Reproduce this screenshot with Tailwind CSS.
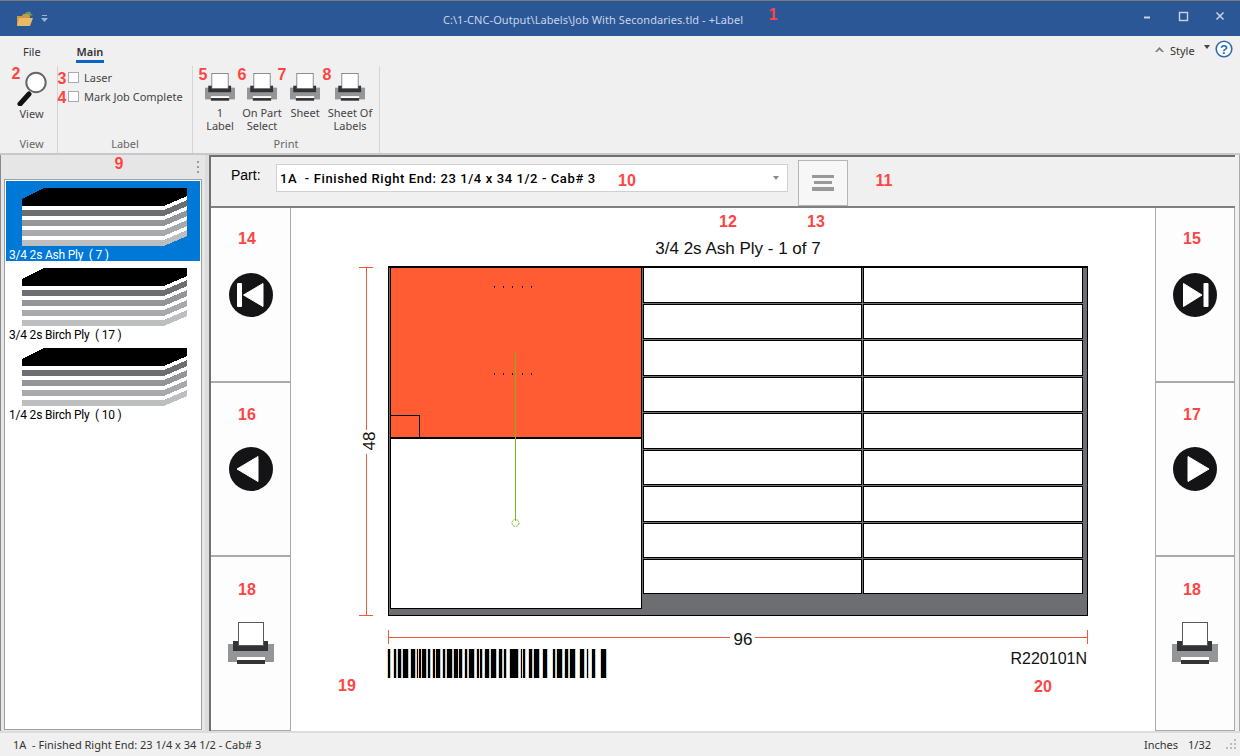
<!DOCTYPE html>
<html lang="en">
<head>
    <meta charset="UTF-8">
    <title>+Label</title>
    <script src="https://cdn.jsdelivr.net/npm/@tailwindcss/browser@4"></script>
</head>
<body class="bg-[#f0f0f0]">

    <!-- Shared icons -->
    <svg class="hidden" xmlns="http://www.w3.org/2000/svg">
        <symbol id="printer" viewBox="0 0 46 42">
            <rect x="0" y="22" width="46" height="18" fill="#939598"/>
            <rect x="5" y="19" width="35" height="10" fill="#333335"/>
            <rect x="10.5" y="0.5" width="25" height="23" fill="#fff" stroke="#58595b"/>
            <rect x="9" y="35" width="28" height="3" fill="#fff"/>
            <rect x="9" y="38" width="28" height="4" fill="#333335"/>
        </symbol>
        <symbol id="stack" viewBox="0 0 165 58">
            <g shape-rendering="crispEdges">
                <polygon points="0,11 22,0 165,0 165,8 142,18 0,18" fill="#000"/>
                <polygon points="0,18 142,18 165,8 165,12 142,22 0,22" fill="#fff"/>
                <polygon points="0,22 142,22 165,12 165,18 142,28 0,28" fill="#6d6e71"/>
                <polygon points="0,28 142,28 165,18 165,22 142,32 0,32" fill="#fff"/>
                <polygon points="0,32 142,32 165,22 165,28 142,38 0,38" fill="#939598"/>
                <polygon points="0,38 142,38 165,28 165,32 142,42 0,42" fill="#fff"/>
                <polygon points="0,42 142,42 165,32 165,38 142,48 0,48" fill="#a7a9ac"/>
                <polygon points="0,48 142,48 165,38 165,42 142,52 0,52" fill="#fff"/>
                <polygon points="0,52 142,52 165,42 165,48 142,58 0,58" fill="#bcbec0"/>
            </g>
        </symbol>
    </svg>

    <div class="relative w-[1240px] h-[756px] overflow-hidden flex flex-col bg-[#f0f0f0] font-['Noto_Sans',sans-serif] text-[11px] leading-[13px] text-[#444]">

        <!-- Title bar -->
        <div class="h-[36px] shrink-0 border-t border-[#7a7a7a] bg-[#2b5797] flex items-center text-[#c9d5e8]">
            <div class="w-[200px] flex items-center pl-[16px] gap-[7px]">
                <svg width="18" height="16" viewBox="0 0 18 16">
                    <path d="M1 5h5l1-2h7v11H1z" fill="#c99a45"/>
                    <path d="M3 7h14l-3 8H1z" fill="#eab968"/>
                    <path d="M8 4c1-3 4-4 7-3l-1 1 3 2-4 1 0-2c-2-.5-4 0-5 1z" fill="#6f9c6a"/>
                </svg>
                <svg width="7" height="7" viewBox="0 0 7 7">
                    <rect x="1" y="0" width="5" height="1" fill="#9fb2d1"/>
                    <polygon points="0,3 7,3 3.5,7" fill="#9fb2d1"/>
                </svg>
            </div>
            <div class="flex-1 text-center text-[11px] tracking-[0.07px] pt-[2px]">C:\1-CNC-Output\Labels\Job With Secondaries.tld - +Label</div>
            <div class="w-[254px] flex justify-end items-center">
                <svg width="106" height="20" viewBox="0 0 106 20" fill="none" stroke="#c9d3e4">
                    <path d="M10 8.5h6" stroke-width="2"/>
                    <rect x="45.5" y="3.5" width="8" height="8" stroke-width="1.4"/>
                    <path d="M82.5 3.5l7 7M89.5 3.5l-7 7" stroke-width="1.5"/>
                </svg>
            </div>
        </div>

        <!-- Ribbon -->
        <div class="h-[117px] shrink-0 relative">
            <div class="h-[27px] flex items-end justify-between">
                <div class="flex items-end pl-[23px]">
                    <div class="w-[53px] pb-[5px] text-[#333]">File</div>
                    <div class="w-[28px] pb-[2px] border-b-[3px] border-[#0a64c8] font-semibold text-[#333] text-center">Main</div>
                </div>
                <div class="flex items-center pr-[7px] pb-[5px]">
                    <svg width="9" height="6" viewBox="0 0 9 6" class="mr-[6px] mt-[2px]"><polygon points="4.5,0 9,5 7,5 4.5,2.5 2,5 0,5" fill="#777"/></svg>
                    <span class="w-[34px] text-[#333] mt-[3px]">Style</span>
                    <svg width="6" height="4" viewBox="0 0 6 4" class="mr-[5px] mb-[4px]"><polygon points="0,0 6,0 3,4" fill="#444"/></svg>
                    <svg width="18" height="18" viewBox="0 0 18 18">
                        <circle cx="9" cy="9" r="7.8" fill="#fff" stroke="#2b6db5" stroke-width="1.6"/>
                        <text x="9" y="13.5" text-anchor="middle" font-family="Liberation Sans" font-weight="700" font-size="13" fill="#2b6db5">?</text>
                    </svg>
                </div>
            </div>
            <div class="h-[87px] mt-[3px] flex">
                <!-- View group -->
                <div class="w-[58px] border-r border-[#d4d4d4] flex flex-col items-center">
                    <svg width="34" height="36" viewBox="0 0 34 36" class="mt-[4px] ml-[9px] shrink-0">
                        <path d="M13 24L4 34" stroke="#111" stroke-width="5" stroke-linecap="round"/>
                        <circle cx="20" cy="12.5" r="9.7" fill="#fff" stroke="#666" stroke-width="2"/>
                    </svg>
                    <div class="mt-[1px] ml-[6px]">View</div>
                    <div class="mt-[17px] ml-[6px] text-[#666]">View</div>
                </div>
                <!-- Label group -->
                <div class="w-[135px] border-r border-[#d4d4d4] flex flex-col pl-[10px]">
                    <label class="flex items-center gap-[5px] mt-[5px] h-[12px]"><span class="w-[11px] h-[11px] bg-white border border-[#aaa]"></span>Laser</label>
                    <label class="flex items-center gap-[5px] mt-[7px] h-[12px]"><span class="w-[11px] h-[11px] bg-white border border-[#aaa]"></span>Mark Job Complete</label>
                    <div class="mt-[35px] text-center text-[#666] pr-[10px]">Label</div>
                </div>
                <!-- Print group -->
                <div class="w-[187px] border-r border-[#d4d4d4] flex flex-col">
                    <div class="flex h-[61px] pt-[7px] text-center">
                        <div class="w-[54px] flex flex-col items-center">
                            <svg width="30" height="28" class="shrink-0"><use href="#printer"/></svg>
                            <div class="mt-[5px]">1<br>Label</div>
                        </div>
                        <div class="w-[30px] flex flex-col items-center">
                            <svg width="30" height="28" class="shrink-0"><use href="#printer"/></svg>
                            <div class="mt-[5px] whitespace-nowrap">On Part<br>Select</div>
                        </div>
                        <div class="w-[56px] flex flex-col items-center">
                            <svg width="30" height="28" class="shrink-0"><use href="#printer"/></svg>
                            <div class="mt-[5px]">Sheet</div>
                        </div>
                        <div class="w-[34px] flex flex-col items-center">
                            <svg width="30" height="28" class="shrink-0"><use href="#printer"/></svg>
                            <div class="mt-[5px] whitespace-nowrap">Sheet Of<br>Labels</div>
                        </div>
                    </div>
                    <div class="mt-[10px] text-center text-[#666]">Print</div>
                </div>
            </div>
        </div>

        <!-- Body -->
        <div class="h-[578px] shrink-0 flex border-t-2 border-[#c8c8c8]">
            <!-- Material list -->
            <div class="w-[209px] shrink-0 flex flex-col bg-[#e6e6e6] border-l border-[#8a8a8a] border-r-[4px] border-r-[#dcdcdc]">
                <div class="h-[24px] shrink-0 flex justify-end items-center pr-[6px]">
                    <div class="flex flex-col gap-[3px]">
                        <span class="w-[2px] h-[2px] bg-[#999]"></span>
                        <span class="w-[2px] h-[2px] bg-[#999]"></span>
                        <span class="w-[2px] h-[2px] bg-[#999]"></span>
                    </div>
                </div>
                <div class="flex-1 mx-[3px] mb-[1px] bg-white border border-[#a0a0a0] p-[1px] font-['Roboto',sans-serif] text-[12px] tracking-[-0.2px] text-black">
                    <div class="h-[80px] bg-[#0078d7] text-white pt-[7px] pl-[16px] relative">
                        <svg width="165" height="58" class="block"><use href="#stack"/></svg>
                        <div class="absolute left-[3px] top-[68px] whitespace-pre">3/4 2s Ash Ply  ( 7 )</div>
                    </div>
                    <div class="h-[80px] pt-[7px] pl-[16px] relative">
                        <svg width="165" height="58" class="block"><use href="#stack"/></svg>
                        <div class="absolute left-[3px] top-[68px] whitespace-pre">3/4 2s Birch Ply  ( 17 )</div>
                    </div>
                    <div class="h-[80px] pt-[7px] pl-[16px] relative">
                        <svg width="165" height="58" class="block"><use href="#stack"/></svg>
                        <div class="absolute left-[3px] top-[68px] whitespace-pre">1/4 2s Birch Ply  ( 10 )</div>
                    </div>
                </div>
            </div>

            <!-- Main panel -->
            <div class="w-[1026px] shrink-0 flex flex-col border-l-2 border-t-2 border-[#707070] bg-white">
                <!-- Part selector -->
                <div class="h-[51px] shrink-0 bg-[#f0f0f0] border-b-2 border-[#808080] flex items-start font-['Liberation_Sans',sans-serif]">
                    <div class="w-[65px] pl-[20px] mt-[12px] text-[14px] text-black">Part:</div>
                    <div class="w-[512px] h-[28px] mt-[7px] bg-white border border-[#d0d0d0] flex items-center justify-between pl-[3px] pr-[8px]">
                        <span class="font-['Roboto',sans-serif] font-medium text-[13px] text-black whitespace-pre tracking-[0.6px]">1A  - Finished Right End: 23 1/4 x 34 1/2 - Cab# 3</span>
                        <svg width="6" height="4" viewBox="0 0 6 4"><polygon points="0,0 6,0 3,4" fill="#888"/></svg>
                    </div>
                    <div class="ml-[10px] mt-[3px] w-[50px] h-[46px] bg-[#f7f7f7] border border-[#b5b5b5] flex flex-col items-center justify-center gap-[3px]">
                        <span class="w-[22px] h-[3px] bg-[#999]"></span>
                        <span class="w-[18px] h-[3px] bg-[#999]"></span>
                        <span class="w-[22px] h-[4px] bg-[#999]"></span>
                    </div>
                </div>

                <!-- Nav columns and drawing -->
                <div class="flex-1 min-h-0 flex">
                    <div class="w-[80px] shrink-0 flex flex-col border-r border-b border-[#aaa] bg-[#fdfdfd]">
                        <button class="h-[175px] flex items-center justify-center border-b-2 border-[#aaa] pl-[1px]">
                            <svg width="44" height="44" viewBox="0 0 44 44">
                                <circle cx="22" cy="22" r="22" fill="#141416"/>
                                <rect x="8" y="10" width="5" height="24" rx="1" fill="#fff"/>
                                <polygon points="14.5,22 34,10.5 34,33.5" fill="#fff" stroke="#fff" stroke-linejoin="round"/>
                            </svg>
                        </button>
                        <button class="h-[174px] flex items-center justify-center border-b-2 border-[#aaa] pl-[1px]">
                            <svg width="44" height="44" viewBox="0 0 44 44">
                                <circle cx="22" cy="22" r="22" fill="#141416"/>
                                <polygon points="8,22 29,9.5 29,34.5" fill="#fff" stroke="#fff" stroke-linejoin="round"/>
                            </svg>
                        </button>
                        <button class="flex-1 flex items-center justify-center pl-[1px] pb-[2px]">
                            <svg width="46" height="42"><use href="#printer"/></svg>
                        </button>
                    </div>

                    <!-- Sheet drawing -->
                    <svg class="shrink-0 block w-[864px] h-[522px]" width="864" height="522" viewBox="291 208 864 522" font-family="Liberation Sans" shape-rendering="crispEdges">
                        <text x="738" y="254" text-anchor="middle" font-size="17" fill="#111">3/4 2s Ash Ply - 1 of 7</text>

                        <!-- Sheet -->
                        <rect x="388.5" y="266.5" width="699" height="349" fill="#6d6e71" stroke="#000"/>
                        <rect x="389" y="266" width="698" height="2" fill="#000"/>
                        <rect x="390.5" y="267.5" width="251" height="170" fill="#ff5c33" stroke="#000"/>
                        <rect x="391" y="437" width="250" height="2" fill="#000"/>
                        <rect x="391" y="268" width="33" height="1" fill="#ff5c33"/>
                        <rect x="390.5" y="438.5" width="251" height="170" fill="#fff" stroke="#000"/>
                        <rect x="390.5" y="415.5" width="29" height="22" fill="none" stroke="#000"/>

                        <!-- Cells -->
                        <g fill="#fff" stroke="#000">
                            <rect x="643.5" y="267.5" width="218" height="35"/><rect x="863.5" y="267.5" width="219" height="35"/>
                            <rect x="643.5" y="304.5" width="218" height="34"/><rect x="863.5" y="304.5" width="219" height="34"/>
                            <rect x="643.5" y="340.5" width="218" height="35"/><rect x="863.5" y="340.5" width="219" height="35"/>
                            <rect x="643.5" y="377.5" width="218" height="34"/><rect x="863.5" y="377.5" width="219" height="34"/>
                            <rect x="643.5" y="413.5" width="218" height="35"/><rect x="863.5" y="413.5" width="219" height="35"/>
                            <rect x="643.5" y="450.5" width="218" height="34"/><rect x="863.5" y="450.5" width="219" height="34"/>
                            <rect x="643.5" y="486.5" width="218" height="35"/><rect x="863.5" y="486.5" width="219" height="35"/>
                            <rect x="643.5" y="523.5" width="218" height="34"/><rect x="863.5" y="523.5" width="219" height="34"/>
                            <rect x="643.5" y="559.5" width="218" height="34"/><rect x="863.5" y="559.5" width="219" height="34"/>
                        </g>

                        <!-- Machining marks -->
                        <g fill="#000">
                            <rect x="494" y="286" width="1" height="2"/><rect x="503" y="286" width="1" height="2"/><rect x="512" y="286" width="1" height="2"/><rect x="522" y="286" width="1" height="2"/><rect x="531" y="286" width="1" height="2"/>
                            <rect x="494" y="373" width="1" height="2"/><rect x="503" y="373" width="1" height="2"/><rect x="512" y="373" width="1" height="2"/><rect x="522" y="373" width="1" height="2"/><rect x="531" y="373" width="1" height="2"/>
                        </g>
                        <rect x="515" y="353" width="1" height="168" fill="#7fb414"/>
                        <circle cx="515.5" cy="523" r="3.5" fill="none" stroke="#7fb414" stroke-dasharray="2 1" shape-rendering="auto"/>

                        <!-- Dimensions -->
                        <g fill="#f15a36">
                            <rect x="366" y="267" width="1" height="349"/>
                            <rect x="359" y="267" width="14" height="1"/>
                            <rect x="359" y="615" width="14" height="1"/>
                            <rect x="388" y="637" width="700" height="1"/>
                            <rect x="388" y="630" width="1" height="14"/>
                            <rect x="1087" y="630" width="1" height="14"/>
                        </g>
                        <rect x="360" y="430" width="18" height="24" fill="#fff"/>
                        <text transform="translate(375 441) rotate(-90)" text-anchor="middle" font-size="17" fill="#111" shape-rendering="auto">48</text>
                        <rect x="730" y="630" width="25" height="16" fill="#fff"/>
                        <text x="743" y="645" text-anchor="middle" font-size="17" fill="#111">96</text>

                        <!-- Barcode -->
                        <g id="barcode"></g>
                        <text x="1087" y="664" text-anchor="end" font-size="16" fill="#111">R220101N</text>
                    </svg>

                    <div class="w-[80px] shrink-0 flex flex-col border-l border-r border-b border-[#aaa] bg-[#fdfdfd]">
                        <button class="h-[175px] flex items-center justify-center border-b-2 border-[#aaa]">
                            <svg width="44" height="44" viewBox="0 0 44 44">
                                <circle cx="22" cy="22" r="22" fill="#141416"/>
                                <polygon points="10.5,10.5 29,22 10.5,33.5" fill="#fff" stroke="#fff" stroke-linejoin="round"/>
                                <rect x="30.5" y="10" width="5" height="24" rx="1" fill="#fff"/>
                            </svg>
                        </button>
                        <button class="h-[174px] flex items-center justify-center border-b-2 border-[#aaa]">
                            <svg width="44" height="44" viewBox="0 0 44 44">
                                <circle cx="22" cy="22" r="22" fill="#141416"/>
                                <polygon points="15,9.5 36,22 15,34.5" fill="#fff" stroke="#fff" stroke-linejoin="round"/>
                            </svg>
                        </button>
                        <button class="flex-1 flex items-center justify-center pb-[2px]">
                            <svg width="46" height="42"><use href="#printer"/></svg>
                        </button>
                    </div>
                </div>
            </div>
            <div class="flex-1 border-r border-[#aaa]"></div>
        </div>

        <!-- Status bar -->
        <div class="h-[25px] shrink-0 border-t-2 border-[#dcdcdc] flex items-center justify-between pl-[13px] pr-[3px] text-[#333]">
            <span class="whitespace-pre">1A  - Finished Right End: 23 1/4 x 34 1/2 - Cab# 3</span>
            <div class="flex items-center">
                <span class="w-[44px]">Inches</span>
                <span class="w-[38px]">1/32</span>
                <svg width="11" height="11" viewBox="0 0 11 11" fill="#bbb">
                    <rect x="8" y="0" width="2" height="2"/><rect x="4" y="4" width="2" height="2"/><rect x="8" y="4" width="2" height="2"/>
                    <rect x="0" y="8" width="2" height="2"/><rect x="4" y="8" width="2" height="2"/><rect x="8" y="8" width="2" height="2"/>
                </svg>
            </div>
        </div>

        <!-- Red callout numbers drawn over the screenshot -->
        <div class="absolute left-0 right-0 top-[1px] font-['Liberation_Sans',sans-serif] font-bold text-[16px] leading-none text-[#ff4444]">
            <span class="absolute left-[773px] top-[14px] -translate-x-1/2 -translate-y-1/2">1</span>
            <span class="absolute left-[16px] top-[73px] -translate-x-1/2 -translate-y-1/2">2</span>
            <span class="absolute left-[62px] top-[78px] -translate-x-1/2 -translate-y-1/2">3</span>
            <span class="absolute left-[62px] top-[97px] -translate-x-1/2 -translate-y-1/2">4</span>
            <span class="absolute left-[203px] top-[74px] -translate-x-1/2 -translate-y-1/2">5</span>
            <span class="absolute left-[242px] top-[74px] -translate-x-1/2 -translate-y-1/2">6</span>
            <span class="absolute left-[282px] top-[74px] -translate-x-1/2 -translate-y-1/2">7</span>
            <span class="absolute left-[327px] top-[74px] -translate-x-1/2 -translate-y-1/2">8</span>
            <span class="absolute left-[119px] top-[163px] -translate-x-1/2 -translate-y-1/2">9</span>
            <span class="absolute left-[627px] top-[180px] -translate-x-1/2 -translate-y-1/2">10</span>
            <span class="absolute left-[884px] top-[180px] -translate-x-1/2 -translate-y-1/2">11</span>
            <span class="absolute left-[728px] top-[221px] -translate-x-1/2 -translate-y-1/2">12</span>
            <span class="absolute left-[816px] top-[221px] -translate-x-1/2 -translate-y-1/2">13</span>
            <span class="absolute left-[247px] top-[238px] -translate-x-1/2 -translate-y-1/2">14</span>
            <span class="absolute left-[1192px] top-[238px] -translate-x-1/2 -translate-y-1/2">15</span>
            <span class="absolute left-[247px] top-[414px] -translate-x-1/2 -translate-y-1/2">16</span>
            <span class="absolute left-[1192px] top-[414px] -translate-x-1/2 -translate-y-1/2">17</span>
            <span class="absolute left-[247px] top-[589px] -translate-x-1/2 -translate-y-1/2">18</span>
            <span class="absolute left-[1192px] top-[589px] -translate-x-1/2 -translate-y-1/2">18</span>
            <span class="absolute left-[347px] top-[685px] -translate-x-1/2 -translate-y-1/2">19</span>
            <span class="absolute left-[1043px] top-[686px] -translate-x-1/2 -translate-y-1/2">20</span>
        </div>
    </div>

    <script>
        // Barcode bars as [x, width], read off the label
        const BARS = [
            [388,2],[394,2],[398,3],[403,5],[411,4],[417,1],[419,2],[422,4],[428,2],[433,2],[436,4],
            [443,2],[447,5],[454,4],[459,3],[465,2],[469,5],[477,2],[480,2],[485,4],[491,5],[499,3],
            [504,2],[510,8],[521,1],[523,2],[529,3],[534,5],[543,4],[553,2],[557,5],[565,3],[570,5],
            [580,4],[587,1],[592,3],[601,5]
        ];
        const group = document.getElementById('barcode');
        const addBar = (x, w, fill) => {
            const r = document.createElementNS('http://www.w3.org/2000/svg', 'rect');
            r.setAttribute('x', x);
            r.setAttribute('y', 649);
            r.setAttribute('width', w);
            r.setAttribute('height', 29);
            r.setAttribute('fill', fill);
            group.appendChild(r);
        };
        // The screenshot has ClearType fringes on each bar
        BARS.forEach(([x, w]) => {
            addBar(x - 1, 1, '#f5d2a0');
            addBar(x + w, 1, '#9ccdf5');
            addBar(x, w, '#000');
        });
    </script>
</body>
</html>
